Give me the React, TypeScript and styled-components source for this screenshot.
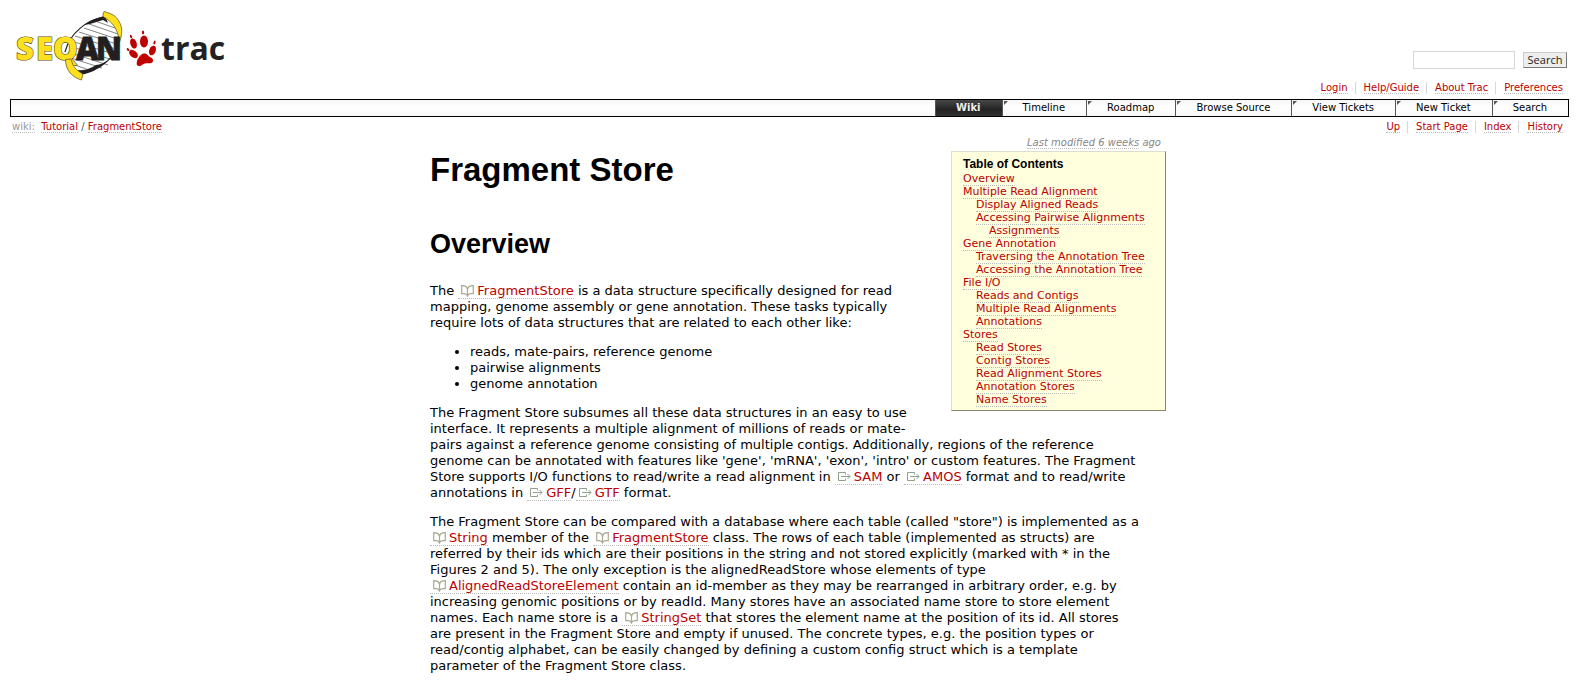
import React from 'react';
import styled, { createGlobalStyle } from 'styled-components';

const Global = createGlobalStyle`
  body { margin: 0; background: #fff; color: #000; font: 13px/16px "DejaVu Sans", Verdana, sans-serif; }
`;

const Page = styled.div`padding: 8px 10px 16px;`;
const Banner = styled.header`display: flex; justify-content: space-between;`;
const LogoLink = styled.a`display: block; margin-left: 6px; line-height: 0;`;
const Tools = styled.div`display: flex; flex-direction: column; align-items: flex-end; padding-top: 43px;`;
const SearchForm = styled.form`display: flex; align-items: center; gap: 8px; padding-right: 2px;`;
const SearchInput = styled.input`
  box-sizing: border-box; width: 102px; height: 18px; padding: 0 2px;
  border: 1px solid #d7d7d7; border-radius: 0; font: 11px "DejaVu Sans", sans-serif;
`;
const SearchButton = styled.button`
  box-sizing: border-box; width: 44px; height: 16px; padding: 0;
  border: 1px solid; border-color: #ccc #777 #777 #ccc; border-radius: 0; background: #eee;
  color: #222; font: 11px/14px "Open Sans", sans-serif;
`;
const Link = styled.a<{ $muted?: boolean }>`
  color: ${p => (p.$muted ? '#999' : '#b00')};
  text-decoration: none; border-bottom: 1px dotted #bbb;
`;
const IconLink = styled(Link)`white-space: nowrap;`;
const MenuList = styled.ul`
  display: flex; list-style: none; margin: 0; padding: 0 6px 0 0; font-size: 10px; line-height: 12px;
`;
const MenuItem = styled.li`
  padding: 0 7px 0 8px; border-right: 1px solid #d7d7d7;
  &:last-child { padding-right: 0; border-right: 0; }
`;
const MetaNav = styled.nav`margin-top: 13px;`;
const MainNav = styled.nav`
  margin-top: 5px; border: 1px solid #000;
  background: linear-gradient(#f6f6f6, #fff 50%, #f6f6f6);
`;
const Tabs = styled.ul`
  display: flex; justify-content: flex-end; list-style: none; margin: 0; padding: 0;
  font-size: 10px; line-height: 16px;
`;
const Tab = styled.li<{ $active?: boolean }>`
  position: relative; border-left: 1px solid #555;
  ${p => p.$active && 'background: linear-gradient(#484848, #222 60%, #333); font-weight: bold;'}
  &:not(:first-child)::before {
    content: ""; position: absolute; top: 1px; left: 1px;
    border-top: 4px solid #555; border-right: 4px solid transparent;
  }
`;
const TabLink = styled.a<{ $active?: boolean }>`
  display: block; padding: 0 21px 0 20px;
  color: ${p => (p.$active ? '#eee' : '#000')}; text-decoration: none;
`;
const ContextRow = styled.div`
  display: flex; justify-content: space-between; padding: 4px 0 0 2px;
  font-size: 10px; line-height: 12px; color: #555;
`;
const Content = styled.main`
  box-sizing: border-box; max-width: 753px; margin: 4px auto 0; padding-left: 17px;
`;
const Modified = styled.div`
  padding-right: 5px; text-align: right; font-size: 10px; line-height: 12px; font-style: italic; color: #888;
`;
const ModLink = styled(Link)`color: #888;`;
const Toc = styled.nav`
  float: right; box-sizing: border-box; width: 215px; margin: 2px 0 16px 16px; padding: 5px 11px 4px;
  border: 1px solid; border-color: #ddc #886 #886 #ddc; background: #ffd;
  font-size: 11px; line-height: 13px; white-space: nowrap;
`;
const TocTitle = styled.h4`margin: 0 0 1px; font: bold 12px/14px "Liberation Sans", Arial, sans-serif;`;
const TocList = styled.ol`list-style: none; margin: 0; padding: 0;`;
const TocItem = styled.li<{ $level: number }>`padding-left: ${p => p.$level * 13}px;`;
const Title = styled.h1`margin: 0; padding-top: 2px; font: bold 33px/38px "Liberation Sans", Arial, sans-serif;`;
const Heading = styled.h2`margin: 39px 0 23px; font: bold 27px/32px "Liberation Sans", Arial, sans-serif;`;
const Para = styled.p`margin: 0 0 13px;`;
const Bullets = styled.ul`margin: 0 0 13px; padding-left: 40px;`;
const Icon = styled.svg`margin: 0 3px; vertical-align: -2px;`;

const BookIcon = () => (
  <Icon width="13" height="12" viewBox="0 0 13 12" fill="none" stroke="#a9a993" aria-hidden="true">
    <path d="M6.5 10.500V4.500C6.200 2.200 5 1 3.200.8L.7.6v8h2.600c1.800 0 2.700.8 3.200 2.200.5-1.400 1.400-2.200 3.200-2.200h2.600v-8L9.800.8C8 1 6.800 2.200 6.500 4.500" strokeWidth="1.2" />
  </Icon>
);
const ExitIcon = () => (
  <Icon width="13" height="12" viewBox="0 0 13 12" fill="none" stroke="#8fa088" aria-hidden="true">
    <path d="M7.500 3.500v-2h-7v8h7v-2M3 5.500h9M9.500 3 12 5.500 9.500 8" />
  </Icon>
);
const Doc = ({ children }: { children: string }) => <IconLink href="#"><BookIcon />{children}</IconLink>;
const Ext = ({ children }: { children: string }) => <IconLink href="#"><ExitIcon />{children}</IconLink>;

const toc: [string, number][] = [
  ['Overview', 0], ['Multiple Read Alignment', 0], ['Display Aligned Reads', 1],
  ['Accessing Pairwise Alignments', 1], ['Assignments', 2], ['Gene Annotation', 0],
  ['Traversing the Annotation Tree', 1], ['Accessing the Annotation Tree', 1], ['File I/O', 0],
  ['Reads and Contigs', 1], ['Multiple Read Alignments', 1], ['Annotations', 1], ['Stores', 0],
  ['Read Stores', 1], ['Contig Stores', 1], ['Read Alignment Stores', 1], ['Annotation Stores', 1], ['Name Stores', 1],
];
const tabs = ['Wiki', 'Timeline', 'Roadmap', 'Browse Source', 'View Tickets', 'New Ticket', 'Search'];

const Menu = ({ items }: { items: string[] }) => (
  <MenuList>{items.map(t => <MenuItem key={t}><Link href="#">{t}</Link></MenuItem>)}</MenuList>
);

const LogoText = styled.text`font: 800 31px "Open Sans", sans-serif; paint-order: stroke;`;
const TracText = styled.text`font: 700 32px "Open Sans", sans-serif;`;

const Logo = () => (
  <svg width="212" height="76" viewBox="16 8 212 76" role="img" aria-label="SeqAn Trac">
    <path d="M103 17C88 21 72 32 66 50c0 10 5 19 14 23 17-3 35-14 39-30 1-12-5-21-16-26z" fill="#fff" />
    <g stroke="#666" strokeWidth=".8">
      <path d="M95 21l20 7M89 24l29 10M84 28l36 12M79 32l41 13M75 36l44 14M71 41l46 14M69 46l44 14M68 52l40 13M68 57l34 11M72 64l20 7" />
    </g>
    <path d="M103 17C88 20 70 32 65 52" fill="none" stroke="#231f20" strokeWidth="1.2" />
    <path d="M103 16.500C96 18 89 21 84 25l6-1 13-4 5 3-2-5z" fill="#231f20" />
    <path d="M104 11.500c-1 2-1 3-1 5 9 5 15 12 16.500 26 3-9 3-16-.5-21-3-6-8-8-15-10z" fill="#ffe01f" stroke="#554c12" strokeWidth=".7" />
    <path d="M119.500 43C116 58 98 72 82 74.500L77 70c9 1 14-2 19-5 9-1 15-7 17-13z" fill="#231f20" />
    <g fill="#ffe01f" stroke="#554c12" strokeWidth="1.2">
      <LogoText x="16" y="60">S</LogoText>
      <LogoText x="36" y="60">E</LogoText>
      <LogoText x="53" y="60">Q</LogoText>
    </g>
    <path d="M65.500 59.500c0 11 7 18 16 20.500l1.300-6C76 70 73 67 71 59z" fill="#ffe01f" stroke="#554c12" strokeWidth=".7" />
    <g fill="#231f20" stroke="#231f20" strokeWidth=".8">
      <LogoText x="76" y="60">A</LogoText>
      <LogoText x="96" y="60">N</LogoText>
    </g>
    <g fill="#c00000">
      <ellipse cx="133.500" cy="43.500" rx="3.200" ry="5.200" transform="rotate(-18 133.500 43.500)" />
      <ellipse cx="144" cy="41.500" rx="4" ry="6" />
      <ellipse cx="152.500" cy="50.500" rx="3.200" ry="5" transform="rotate(22 152.500 50.500)" />
      <ellipse cx="133.500" cy="54" rx="3.400" ry="5" transform="rotate(-50 133.500 54)" />
      <ellipse cx="131" cy="36.500" rx="1" ry="1.900" transform="rotate(-18 131 36.500)" />
      <ellipse cx="143" cy="32.500" rx="1.100" ry="2" />
      <ellipse cx="154.500" cy="42.500" rx="1" ry="2" transform="rotate(15 154.500 42.500)" />
      <ellipse cx="128" cy="49.500" rx="1" ry="1.700" transform="rotate(-40 128 49.500)" />
      <path d="M143.500 53.500c3.500-.8 4.500 2.500 7 3.800 3.500 1.500 3.500 5.500-.2 6-3.500-.3-5.500-.2-8 1.500-2.500 2.500-6.500 1.500-5.500-2.500.5-3.500 3.500-8 6.700-8.800z" />
    </g>
    <TracText x="161" y="60" fill="#222">trac</TracText>
  </svg>
);

export default function App() {
  return (
    <>
      <Global />
      <Page>
        <Banner>
          <LogoLink href="#"><Logo /></LogoLink>
          <Tools>
            <SearchForm onSubmit={e => e.preventDefault()}>
              <SearchInput type="text" aria-label="Search" />
              <SearchButton type="submit">Search</SearchButton>
            </SearchForm>
            <MetaNav><Menu items={['Login', 'Help/Guide', 'About Trac', 'Preferences']} /></MetaNav>
          </Tools>
        </Banner>
        <MainNav>
          <Tabs>
            {tabs.map((t, i) => <Tab key={t} $active={i === 0}><TabLink href="#" $active={i === 0}>{t}</TabLink></Tab>)}
          </Tabs>
        </MainNav>
        <ContextRow>
          <div><Link href="#" $muted>wiki:</Link>&nbsp; <Link href="#">Tutorial</Link> / <Link href="#">FragmentStore</Link></div>
          <Menu items={['Up', 'Start Page', 'Index', 'History']} />
        </ContextRow>
        <Content>
          <Modified><ModLink href="#">Last modified</ModLink> <ModLink href="#">6 weeks</ModLink> ago</Modified>
          <Toc>
            <TocTitle>Table of Contents</TocTitle>
            <TocList>{toc.map(([t, l]) => <TocItem key={t} $level={l}><Link href="#">{t}</Link></TocItem>)}</TocList>
          </Toc>
          <Title>Fragment Store</Title>
          <Heading>Overview</Heading>
          <Para>
            The <Doc>FragmentStore</Doc> is a data structure specifically designed for read<br />
            mapping, genome assembly or gene annotation. These tasks typically<br />
            require lots of data structures that are related to each other like:
          </Para>
          <Bullets>
            <li>reads, mate-pairs, reference genome</li>
            <li>pairwise alignments</li>
            <li>genome annotation</li>
          </Bullets>
          <Para>
            The Fragment Store subsumes all these data structures in an easy to use<br />
            interface. It represents a multiple alignment of millions of reads or mate-<br />
            pairs against a reference genome consisting of multiple contigs. Additionally, regions of the reference<br />
            genome can be annotated with features like 'gene', 'mRNA', 'exon', 'intro' or custom features. The Fragment<br />
            Store supports I/O functions to read/write a read alignment in <Ext>SAM</Ext> or <Ext>AMOS</Ext> format and to read/write<br />
            annotations in <Ext>GFF</Ext>/<Ext>GTF</Ext> format.
          </Para>
          <Para>
            The Fragment Store can be compared with a database where each table (called "store") is implemented as a<br />
            <Doc>String</Doc> member of the <Doc>FragmentStore</Doc> class. The rows of each table (implemented as structs) are<br />
            referred by their ids which are their positions in the string and not stored explicitly (marked with * in the<br />
            Figures 2 and 5). The only exception is the alignedReadStore whose elements of type<br />
            <Doc>AlignedReadStoreElement</Doc> contain an id-member as they may be rearranged in arbitrary order, e.g. by<br />
            increasing genomic positions or by readId. Many stores have an associated name store to store element<br />
            names. Each name store is a <Doc>StringSet</Doc> that stores the element name at the position of its id. All stores<br />
            are present in the Fragment Store and empty if unused. The concrete types, e.g. the position types or<br />
            read/contig alphabet, can be easily changed by defining a custom config struct which is a template<br />
            parameter of the Fragment Store class.
          </Para>
        </Content>
      </Page>
    </>
  );
}
